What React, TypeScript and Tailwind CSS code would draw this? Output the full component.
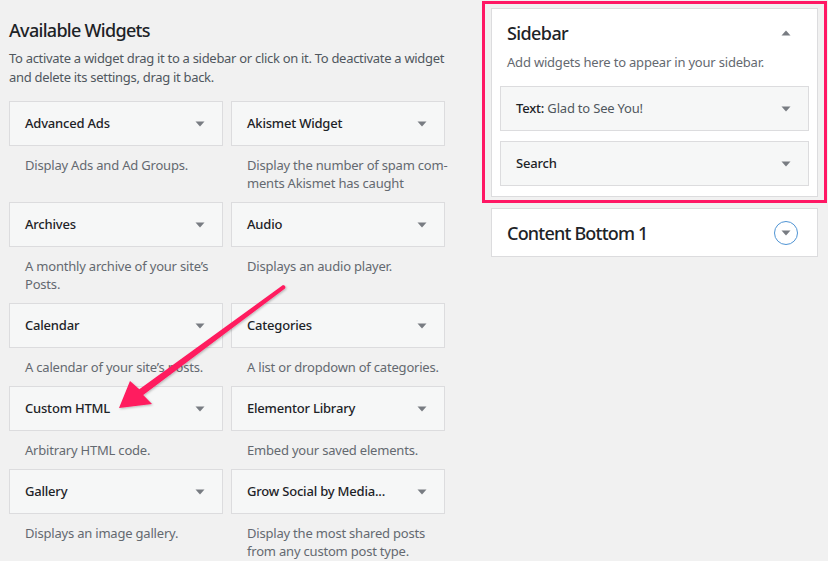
import React from "react";

const FONT = { fontFamily: '"Noto Sans", "Open Sans", sans-serif' };

type W = { title: string; desc: React.ReactNode };

const widgets: W[][] = [
  [
    { title: "Advanced Ads", desc: "Display Ads and Ad Groups." },
    { title: "Akismet Widget", desc: <>Display the number of spam com-<br />ments Akismet has caught</> },
  ],
  [
    { title: "Archives", desc: <>A monthly archive of your site’s<br />Posts.</> },
    { title: "Audio", desc: "Displays an audio player." },
  ],
  [
    { title: "Calendar", desc: "A calendar of your site’s posts." },
    { title: "Categories", desc: "A list or dropdown of categories." },
  ],
  [
    { title: "Custom HTML", desc: "Arbitrary HTML code." },
    { title: "Elementor Library", desc: "Embed your saved elements." },
  ],
  [
    { title: "Gallery", desc: "Displays an image gallery." },
    { title: "Grow Social by Media...", desc: <>Display the most shared posts<br />from any custom post type.</> },
  ],
];

function Down({ className = "" }: { className?: string }) {
  return (
    <svg width="10" height="6" viewBox="0 0 10 6" className={className}>
      <path d="M0.5 0.5 L9.5 0.5 L5 5.5 Z" fill="#787c82" />
    </svg>
  );
}

function Up() {
  return (
    <svg width="10" height="6" viewBox="0 0 10 6">
      <path d="M0.5 5.5 L9.5 5.5 L5 0.5 Z" fill="#787c82" />
    </svg>
  );
}

function WidgetBox({ children }: { children: React.ReactNode }) {
  return (
    <div className="h-[45px] border border-[#dcdcde] bg-[#f6f7f7] flex items-center justify-between pl-[15px] pr-[17px]">
      <div className="text-[13px] font-medium text-[#1d2327] whitespace-nowrap tracking-[-0.2px]">{children}</div>
      <Down />
    </div>
  );
}

export default function App() {
  return (
    <div className="relative w-[828px] h-[561px] overflow-hidden bg-[#f1f1f1] flex" style={FONT}>
      <div className="w-[444px] pl-[9px] pt-[18px] shrink-0">
        <h2 className="text-[18px] leading-[24px] text-[#1d2327] font-medium tracking-[-0.7px]">Available Widgets</h2>
        <p className="mt-[7px] text-[13px] leading-[19px] text-[#50575e] whitespace-nowrap tracking-[-0.3px]">
          To activate a widget drag it to a sidebar or click on it. To deactivate a widget
          <br />
          and delete its settings, drag it back.
        </p>
        <div className="mt-[14px] grid grid-cols-[214px_214px] gap-x-[8px]">
          {widgets.map((row, i) =>
            row.map((w, j) => (
              <div key={i + "-" + j}>
                <WidgetBox>{w.title}</WidgetBox>
                <div className="pl-[16px] pt-[10px] pb-[10px] text-[13px] leading-[18px] text-[#646970] whitespace-nowrap tracking-[-0.2px]">
                  {w.desc}
                </div>
              </div>
            ))
          )}
        </div>
      </div>

      <div className="ml-[38px] pt-[1px] w-[345px] shrink-0">
        <div className="border-[3px] border-[#ff1764] pt-[4px] px-[6px] pb-[3px]">
          <div className="border border-[#dcdcde] bg-white pb-[10px]">
            <div className="flex items-center justify-between pl-[15px] pr-[26px] pt-[12px]">
              <h3 className="text-[18px] leading-[24px] text-[#1d2327] font-medium tracking-[-0.6px]">Sidebar</h3>
              <Up />
            </div>
            <p className="pl-[15px] mt-[8px] text-[13px] leading-[18px] text-[#646970] tracking-[-0.2px]">
              Add widgets here to appear in your sidebar.
            </p>
            <div className="mt-[15px] px-[8px] flex flex-col gap-[10px]">
              <div className="h-[45px] border border-[#dcdcde] bg-[#f6f7f7] flex items-center justify-between pl-[15px] pr-[17px]">
                <div className="text-[13px] text-[#1d2327] whitespace-nowrap tracking-[-0.2px]">
                  <span className="font-medium">Text:</span>
                  <span className="text-[#50575e]"> Glad to See You!</span>
                </div>
                <Down />
              </div>
              <WidgetBox>Search</WidgetBox>
            </div>
          </div>
        </div>
        <div className="mt-[5px] mx-[9px] h-[49px] border border-[#dcdcde] bg-white flex items-center justify-between pl-[15px] pr-[19px]">
          <h3 className="text-[18px] leading-[24px] text-[#1d2327] font-medium tracking-[-0.8px]">Content Bottom 1</h3>
          <div className="w-[24px] h-[24px] rounded-full border-[1.5px] border-[#4f94d4] flex items-center justify-center">
            <Down />
          </div>
        </div>
      </div>

      <svg className="absolute left-0 top-0 pointer-events-none" width="828" height="561" viewBox="0 0 828 561">
        <defs>
          <filter id="sh" x="-20%" y="-20%" width="140%" height="140%">
            <feDropShadow dx="1" dy="1" stdDeviation="1" floodColor="#000" floodOpacity="0.25" />
          </filter>
        </defs>
        <path
          d="M119 408 L130 381 L139.3 389.3 L283 285 Q286.5 285.5 285 288.5 L143.2 395 L152 404 Z"
          fill="#ff1a5e"
          filter="url(#sh)"
        />
      </svg>
    </div>
  );
}
